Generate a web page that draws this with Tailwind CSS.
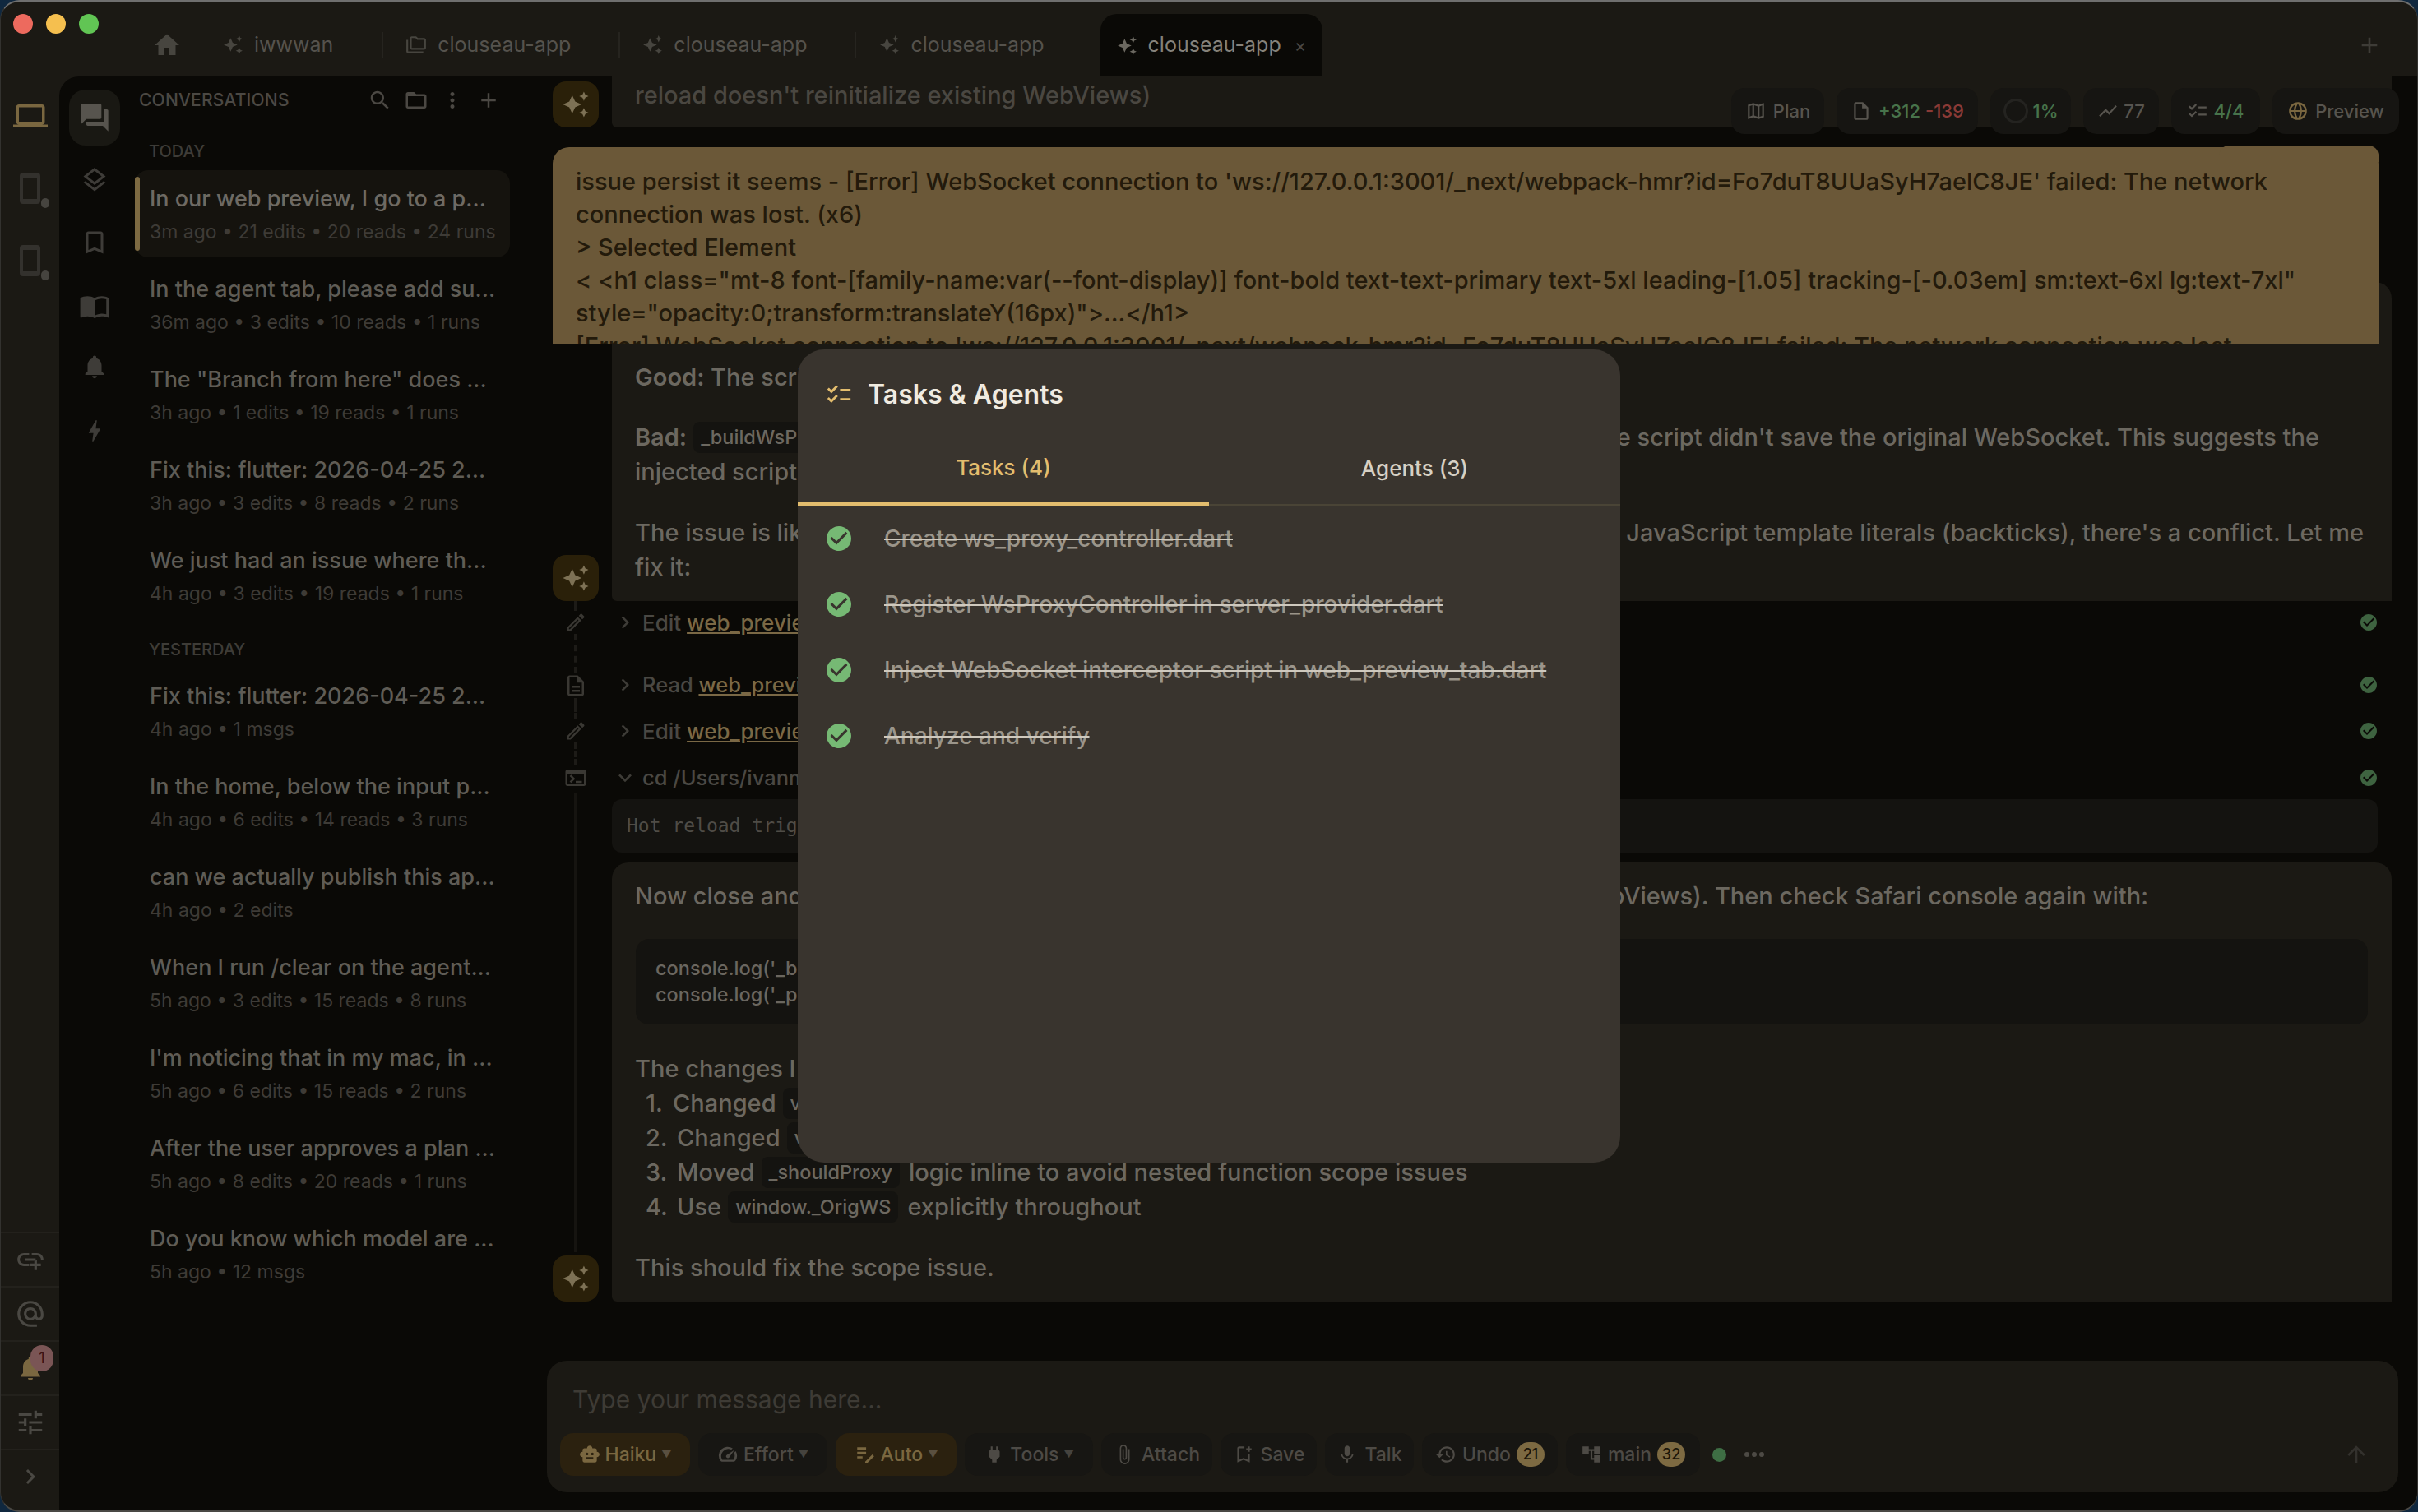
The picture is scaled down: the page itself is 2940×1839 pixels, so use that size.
<!DOCTYPE html>
<html lang="en">
<head>
    <meta charset="UTF-8">
    <title>Clouseau</title>
    <script src="https://cdn.jsdelivr.net/npm/@tailwindcss/browser@4"></script>
</head>
<body class="bg-[#10283f]">

    <!-- Icon sprites -->
    <svg class="hidden">
        <symbol id="i-home" viewBox="0 0 24 24"><path d="M10 20v-6h4v6h5v-8h3L12 3 2 12h3v8z"/></symbol>
        <symbol id="i-spark" viewBox="0 0 24 24"><path d="M19 9l1.25-2.75L23 5l-2.75-1.25L19 1l-1.25 2.75L15 5l2.75 1.25L19 9zm-7.5.5L9 4 6.5 9.5 1 12l5.5 2.5L9 20l2.5-5.5L17 12l-5.5-2.5zM19 15l-1.25 2.75L15 19l2.75 1.25L19 23l1.25-2.75L23 19l-2.75-1.25L19 15z"/></symbol>
        <symbol id="i-folders" viewBox="0 0 24 24"><path d="M3 19h17v2H3c-1.1 0-2-.9-2-2V6h2v13zM23 6v9c0 1.1-.9 2-2 2H7c-1.1 0-2-.9-2-2l.01-11c0-1.1.89-2 1.99-2h5l2 2h7c1.1 0 2 .9 2 2zM7 15h14V6h-7.83l-2-2H7v11z"/></symbol>
        <symbol id="i-laptop" viewBox="0 0 24 24"><path d="M20 18c1.1 0 1.99-.9 1.99-2L22 6c0-1.1-.9-2-2-2H4c-1.1 0-2 .9-2 2v10c0 1.1.9 2 2 2H0v2h24v-2h-4zM4 6h16v10H4V6z"/></symbol>
        <symbol id="i-forum" viewBox="0 0 24 24"><path d="M21 6h-2v9H6v2c0 .55.45 1 1 1h11l4 4V7c0-.55-.45-1-1-1zm-4 6V3c0-.55-.45-1-1-1H3c-.55 0-1 .45-1 1v14l4-4h10c.55 0 1-.45 1-1z"/></symbol>
        <symbol id="i-layers" viewBox="0 0 24 24"><path d="M11.99 18.54l-7.37-5.73L3 14.07l9 7 9-7-1.63-1.27-7.38 5.74zM12 16l7.36-5.73L21 9l-9-7-9 7 1.63 1.27L12 16zm0-11.47L17.74 9 12 13.47 6.26 9 12 4.53z"/></symbol>
        <symbol id="i-bookmark" viewBox="0 0 24 24"><path d="M17 3H7c-1.1 0-1.99.9-1.99 2L5 21l7-3 7 3V5c0-1.1-.9-2-2-2zm0 15l-5-2.18L7 18V5h10v13z"/></symbol>
        <symbol id="i-book" viewBox="0 0 24 24"><path d="M21 5c-1.11-.35-2.33-.5-3.5-.5-1.95 0-4.05.4-5.5 1.5-1.45-1.1-3.55-1.5-5.5-1.5S2.45 4.9 1 6v14.65c0 .25.25.5.5.5.1 0 .15-.05.25-.05C3.1 20.45 5.05 20 6.5 20c1.95 0 4.05.4 5.5 1.5 1.35-.85 3.8-1.5 5.5-1.5 1.65 0 3.35.3 4.75 1.05.1.05.15.05.25.05.25 0 .5-.25.5-.5V6c-.6-.45-1.25-.75-2-1zm0 13.5c-1.1-.35-2.3-.5-3.5-.5-1.7 0-4.15.65-5.5 1.5V8c1.35-.85 3.8-1.5 5.5-1.5 1.2 0 2.4.15 3.5.5v11.5z"/></symbol>
        <symbol id="i-bell" viewBox="0 0 24 24"><path d="M12 22c1.1 0 2-.9 2-2h-4c0 1.1.9 2 2 2zm6-6v-5c0-3.07-1.63-5.64-4.5-6.32V4c0-.83-.67-1.5-1.5-1.5s-1.5.67-1.5 1.5v.68C7.64 5.36 6 7.92 6 11v5l-2 2v1h16v-1l-2-2z"/></symbol>
        <symbol id="i-bolt" viewBox="0 0 24 24"><path d="M11 21h-1l1-7H7.5c-.58 0-.57-.32-.38-.66.19-.34.05-.08.07-.12C8.48 10.94 10.42 7.54 13 3h1l-1 7h3.5c.49 0 .56.33.47.51l-.07.15C12.96 17.55 11 21 11 21z"/></symbol>
        <symbol id="i-search" viewBox="0 0 24 24"><path d="M15.5 14h-.79l-.28-.27C15.41 12.59 16 11.11 16 9.5 16 5.91 13.09 3 9.5 3S3 5.91 3 9.5 5.91 16 9.5 16c1.61 0 3.09-.59 4.23-1.57l.27.28v.79l5 4.99L20.49 19l-4.99-5zm-6 0C7.01 14 5 11.99 5 9.5S7.01 5 9.5 5 14 7.01 14 9.5 11.99 14 9.5 14z"/></symbol>
        <symbol id="i-folder" viewBox="0 0 24 24"><path d="M20 6h-8l-2-2H4c-1.1 0-1.99.9-1.99 2L2 18c0 1.1.9 2 2 2h16c1.1 0 2-.9 2-2V8c0-1.1-.9-2-2-2zm0 12H4V8h16v10z"/></symbol>
        <symbol id="i-vert" viewBox="0 0 24 24"><path d="M12 8c1.1 0 2-.9 2-2s-.9-2-2-2-2 .9-2 2 .9 2 2 2zm0 2c-1.1 0-2 .9-2 2s.9 2 2 2 2-.9 2-2-.9-2-2-2zm0 6c-1.1 0-2 .9-2 2s.9 2 2 2 2-.9 2-2-.9-2-2-2z"/></symbol>
        <symbol id="i-add" viewBox="0 0 24 24"><path d="M19 13h-6v6h-2v-6H5v-2h6V5h2v6h6v2z"/></symbol>
        <symbol id="i-checklist" viewBox="0 0 24 24"><path d="M22 7h-9v2h9V7zm0 8h-9v2h9v-2zM5.54 11L2 7.46l1.41-1.41 2.12 2.12 4.24-4.24 1.41 1.41L5.54 11zm0 8L2 15.46l1.41-1.41 2.12 2.12 4.24-4.24 1.41 1.41L5.54 19z"/></symbol>
        <symbol id="i-map" viewBox="0 0 24 24"><path d="M20.5 3l-.16.03L15 5.1 9 3 3.36 4.9c-.21.07-.36.25-.36.48V20.5c0 .28.22.5.5.5l.16-.03L9 18.9l6 2.1 5.64-1.9c.21-.07.36-.25.36-.48V3.5c0-.28-.22-.5-.5-.5zM10 5.47l4 1.4v11.66l-4-1.4V5.47zm-5 .99l3-1.01v11.7l-3 1.16V6.46zm14 11.08l-3 1.01V6.86l3-1.16v11.84z"/></symbol>
        <symbol id="i-file" viewBox="0 0 24 24"><path d="M14 2H6c-1.1 0-1.99.9-1.99 2L4 20c0 1.1.89 2 1.99 2H18c1.1 0 2-.9 2-2V8l-6-6zM6 20V4h7v5h5v11H6z"/></symbol>
        <symbol id="i-chart" viewBox="0 0 24 24"><path d="M3.5 18.49l6-6.01 4 4L22 6.92l-1.41-1.41-7.09 7.97-4-4L2 16.99z"/></symbol>
        <symbol id="i-robot" viewBox="0 0 24 24"><path d="M20 9V7c0-1.1-.9-2-2-2h-3c0-1.66-1.34-3-3-3S9 3.34 9 5H6c-1.1 0-2 .9-2 2v2c-1.66 0-3 1.34-3 3s1.34 3 3 3v4c0 1.1.9 2 2 2h12c1.1 0 2-.9 2-2v-4c1.66 0 3-1.34 3-3s-1.34-3-3-3zM7.5 11.5c0-.83.67-1.5 1.5-1.5s1.5.67 1.5 1.5S9.83 13 9 13s-1.5-.67-1.5-1.5zM16 17H8v-2h8v2zm-1-4c-.83 0-1.5-.67-1.5-1.5S14.17 10 15 10s1.5.67 1.5 1.5S15.83 13 15 13z"/></symbol>
        <symbol id="i-plug" viewBox="0 0 24 24"><path d="M16 7V3h-2v4h-4V3H8v4h-.01C7 6.99 6 7.99 6 8.99v5.49L9.5 18v3h5v-3l3.5-3.51v-5.5c0-1-1-2-1.99-1.99z"/></symbol>
        <symbol id="i-clip" viewBox="0 0 24 24"><path d="M16.5 6v11.5c0 2.21-1.79 4-4 4s-4-1.79-4-4V5c0-1.38 1.12-2.5 2.5-2.5s2.5 1.12 2.5 2.5v10.5c0 .55-.45 1-1 1s-1-.45-1-1V6H10v9.5c0 1.38 1.12 2.5 2.5 2.5s2.5-1.12 2.5-2.5V5c0-2.21-1.79-4-4-4S7 2.79 7 5v12.5c0 3.04 2.46 5.5 5.5 5.5s5.5-2.46 5.5-5.5V6h-1.5z"/></symbol>
        <symbol id="i-save" viewBox="0 0 24 24"><path d="M17 11v6.97l-5-2.14-5 2.14V5h6V3H7c-1.1 0-2 .9-2 2v16l7-3 7 3V11h-2zm4-4h-2v2h-2V7h-2V5h2V3h2v2h2v2z"/></symbol>
        <symbol id="i-mic" viewBox="0 0 24 24"><path d="M12 14c1.66 0 2.99-1.34 2.99-3L15 5c0-1.66-1.34-3-3-3S9 3.34 9 5v6c0 1.66 1.34 3 3 3zm5.3-3c0 3-2.54 5.1-5.3 5.1S6.7 14 6.7 11H5c0 3.41 2.72 6.23 6 6.72V21h2v-3.28c3.28-.48 6-3.3 6-6.72h-1.7z"/></symbol>
        <symbol id="i-history" viewBox="0 0 24 24"><path d="M13 3c-4.97 0-9 4.03-9 9H1l3.89 3.89.07.14L9 12H6c0-3.87 3.13-7 7-7s7 3.13 7 7-3.13 7-7 7c-1.93 0-3.68-.79-4.94-2.06l-1.42 1.42C8.27 19.99 10.51 21 13 21c4.97 0 9-4.03 9-9s-4.03-9-9-9zm-1 5v5l4.28 2.54.72-1.21-3.5-2.08V8H12z"/></symbol>
        <symbol id="i-branch" viewBox="0 0 24 24"><path d="M22 11V3h-7v3H9V3H2v8h7V8h2v10h4v3h7v-8h-7v3h-2V8h2v3z"/></symbol>
        <symbol id="i-up" viewBox="0 0 24 24"><path d="M4 12l1.41 1.41L11 7.83V20h2V7.83l5.58 5.59L20 12l-8-8-8 8z"/></symbol>
        <symbol id="i-link" viewBox="0 0 24 24"><path d="M8 11h8v2H8zm12.1 1H22c0-2.76-2.24-5-5-5h-4v1.9h4c1.71 0 3.1 1.39 3.1 3.1zM3.9 12c0-1.71 1.39-3.1 3.1-3.1h4V7H7c-2.76 0-5 2.24-5 5s2.24 5 5 5h4v-1.9H7c-1.71 0-3.1-1.39-3.1-3.1zM17 12h-2v3h-3v2h3v3h2v-3h3v-2h-3z"/></symbol>
        <symbol id="i-at" viewBox="0 0 24 24"><path d="M12 2C6.48 2 2 6.48 2 12s4.48 10 10 10h5v-2h-5c-4.34 0-8-3.66-8-8s3.66-8 8-8 8 3.66 8 8v1.43c0 .79-.71 1.57-1.5 1.57s-1.5-.78-1.5-1.57V12c0-2.76-2.24-5-5-5s-5 2.24-5 5 2.24 5 5 5c1.38 0 2.64-.56 3.54-1.47.65.89 1.77 1.47 2.96 1.47 1.97 0 3.5-1.6 3.5-3.57V12c0-5.52-4.48-10-10-10zm0 13c-1.66 0-3-1.34-3-3s1.34-3 3-3 3 1.34 3 3-1.34 3-3 3z"/></symbol>
        <symbol id="i-tune" viewBox="0 0 24 24"><path d="M3 17v2h6v-2H3zM3 5v2h10V5H3zm10 16v-2h8v-2h-8v-2h-2v6h2zM7 9v2H3v2h4v2h2V9H7zm14 4v-2H11v2h10zm-6-4h2V7h4V5h-4V3h-2v6z"/></symbol>
        <symbol id="i-right" viewBox="0 0 24 24"><path d="M10 6L8.59 7.41 13.17 12l-4.58 4.59L10 18l6-6z"/></symbol>
        <symbol id="i-down" viewBox="0 0 24 24"><path d="M16.59 8.59L12 13.17 7.41 8.59 6 10l6 6 6-6z"/></symbol>
        <symbol id="i-edit" viewBox="0 0 24 24"><path d="M14.06 9.02l.92.92L5.92 19H5v-.92l9.06-9.06M17.66 3c-.25 0-.51.1-.7.29l-1.83 1.83 3.75 3.75 1.83-1.83c.39-.39.39-1.02 0-1.41l-2.34-2.34c-.2-.2-.45-.29-.71-.29zm-3.6 3.19L3 17.25V21h3.75L17.81 9.94l-3.75-3.75z"/></symbol>
        <symbol id="i-doc" viewBox="0 0 24 24"><path d="M8 16h8v2H8zm0-4h8v2H8zm6-10H6c-1.1 0-2 .9-2 2v16c0 1.1.89 2 1.99 2H18c1.1 0 2-.9 2-2V8l-6-6zm4 18H6V4h7v5h5v11z"/></symbol>
        <symbol id="i-term" viewBox="0 0 24 24"><path d="M20 4H4c-1.1 0-2 .9-2 2v12c0 1.1.9 2 2 2h16c1.1 0 2-.9 2-2V6c0-1.1-.9-2-2-2zm0 14H4V8h16v10zm-2-1h-6v-2h6v2zM7.5 17l-1.41-1.41L8.67 13l-2.59-2.59L7.5 9l4 4-4 4z"/></symbol>
        <symbol id="i-check" viewBox="0 0 24 24"><path d="M12 2C6.48 2 2 6.48 2 12s4.48 10 10 10 10-4.48 10-10S17.52 2 12 2zm-2 15l-5-5 1.41-1.41L10 14.17l7.59-7.59L19 8l-9 9z"/></symbol>
        <symbol id="i-note" viewBox="0 0 24 24"><path d="M3 4h10v2.4H3zm0 5h10v2.4H3zm0 5h6v2.4H3zm9 6l8-8 2 2-8 8h-2z"/></symbol>
        <symbol id="i-speed" viewBox="0 0 24 24"><path d="M20.4 8.6l-1.5 1.6A7.9 7.9 0 0 1 18.3 18H5.7A8 8 0 0 1 15.8 6.6l1.6-1.5A10 10 0 0 0 3.5 19a2 2 0 0 0 1.7 1h13.6a2 2 0 0 0 1.7-1 10 10 0 0 0 .4-10.4zM10.6 15.4a2 2 0 0 0 2.8 0l6-8.5-8.8 5.7a2 2 0 0 0 0 2.8z"/></symbol>
        <symbol id="i-globe" viewBox="0 0 24 24"><path d="M12 2a10 10 0 1 0 0 20 10 10 0 0 0 0-20zm7.9 9h-3.4a16 16 0 0 0-1.3-6 8 8 0 0 1 4.700 6zM12 4c.9 1.200 2.200 3.700 2.500 7h-5c.3-3.300 1.600-5.800 2.500-7zM8.800 5a16 16 0 0 0-1.300 6H4.100a8 8 0 0 1 4.700-6zM4.100 13h3.400a16 16 0 0 0 1.300 6 8 8 0 0 1-4.700-6zM12 20c-.9-1.200-2.200-3.700-2.500-7h5c-.3 3.300-1.600 5.800-2.500 7zm3.200-1a16 16 0 0 0 1.300-6h3.400a8 8 0 0 1-4.700 6z"/></symbol>
    </svg>

    <div class="relative w-[2940px] h-[1839px] overflow-hidden">
        <!-- Window -->
        <div class="flex flex-col h-full rounded-[24px] border-x border-b-2 border-t-2 border-x-[#33322f] border-b-[#4a4945] border-t-[#6f6f6f] overflow-hidden bg-[#1b1914] font-[Inter,sans-serif]">

            <!-- Tab bar -->
            <div class="h-[91px] shrink-0 flex items-center relative pt-[14px] text-[25px] text-[#55524c]">
                <div class="flex gap-[16px] pl-[15px] self-start pt-[1px]">
                    <div class="w-[24px] h-[24px] rounded-full bg-[#ed6a5e]"></div>
                    <div class="w-[24px] h-[24px] rounded-full bg-[#f5bf4f]"></div>
                    <div class="w-[24px] h-[24px] rounded-full bg-[#61c554]"></div>
                </div>
                <svg class="w-[36px] h-[36px] ml-[65px] fill-[#47453f]"><use href="#i-home"/></svg>
                <div class="flex items-center gap-[13px] pl-[50px] pr-[59px] h-[32px] border-r-2 border-[#26241f]">
                    <svg class="w-[25px] h-[25px] fill-[#47453f]"><use href="#i-spark"/></svg><span>iwwwan</span>
                </div>
                <div class="flex items-center gap-[13px] pl-[27px] pr-[58px] h-[32px] border-r-2 border-[#26241f]">
                    <svg class="w-[26px] h-[26px] fill-[#47453f]"><use href="#i-folders"/></svg><span>clouseau-app</span>
                </div>
                <div class="flex items-center gap-[13px] pl-[27px] pr-[58px] h-[32px] border-r-2 border-[#26241f]">
                    <svg class="w-[25px] h-[25px] fill-[#47453f]"><use href="#i-spark"/></svg><span>clouseau-app</span>
                </div>
                <div class="flex items-center gap-[13px] pl-[28px] pr-[68px] h-[32px]">
                    <svg class="w-[25px] h-[25px] fill-[#47453f]"><use href="#i-spark"/></svg><span>clouseau-app</span>
                </div>
                <div class="flex items-center self-end h-[76px] w-[270px] pl-[20px] rounded-t-[20px] bg-[#0a0906] text-[#85827b]">
                    <svg class="w-[25px] h-[25px] fill-[#6b6860] mr-[13px]"><use href="#i-spark"/></svg><span>clouseau-app</span>
                    <span class="ml-[16px] text-[22px] text-[#4a4843]">×</span>
                </div>
                <svg class="w-[32px] h-[32px] ml-auto mr-[42px] fill-[#3e3c37]"><use href="#i-add"/></svg>
            </div>

            <div class="flex flex-1 min-h-0">
                <!-- Workspace rail -->
                <div class="w-[71px] shrink-0 flex flex-col">
                    <div class="flex justify-center pt-[27px]"><svg class="w-[42px] h-[42px] fill-[#7a6740]"><use href="#i-laptop"/></svg></div>
                    <div class="relative w-[25px] h-[38px] mt-[48px] ml-[23px] rounded-[4px] border-x-[4px] border-y-[6px] border-[#33312d]">
                        <div class="absolute -right-[15px] -bottom-[11px] w-[10px] h-[12px] rounded-full bg-[#46443f]"></div>
                    </div>
                    <div class="relative w-[25px] h-[38px] mt-[50px] ml-[23px] rounded-[4px] border-x-[4px] border-y-[6px] border-[#33312d]">
                        <div class="absolute -right-[15px] -bottom-[11px] w-[10px] h-[12px] rounded-full bg-[#46443f]"></div>
                    </div>
                    <div class="mt-auto flex flex-col">
                        <div class="h-[66px] border-t-2 border-[#23211c] flex items-center justify-center"><svg class="w-[38px] h-[38px] fill-[#4a4843]"><use href="#i-link"/></svg></div>
                        <div class="h-[66px] border-t-2 border-[#23211c] flex items-center justify-center"><svg class="w-[38px] h-[38px] fill-[#4a4843]"><use href="#i-at"/></svg></div>
                        <div class="relative h-[66px] border-t-2 border-[#23211c] flex items-center justify-center">
                            <svg class="w-[36px] h-[36px] fill-[#7a6740]"><use href="#i-bell"/></svg>
                            <div class="absolute left-[36px] top-[4px] w-[28px] h-[32px] rounded-full bg-[#7a5555] text-[#3a0f0f] text-[18px] leading-[32px] text-center">1</div>
                        </div>
                        <div class="h-[66px] border-t-2 border-[#23211c] flex items-center justify-center"><svg class="w-[38px] h-[38px] fill-[#4a4843]"><use href="#i-tune"/></svg></div>
                        <div class="h-[75px] border-t-2 border-[#23211c] flex items-center justify-center pb-[10px]"><svg class="w-[36px] h-[36px] fill-[#4a4843]"><use href="#i-right"/></svg></div>
                    </div>
                </div>

                <!-- Content -->
                <div class="relative flex flex-1 min-w-0 rounded-tl-[24px] bg-[#0a0906]">
                    <!-- Sidebar nav -->
                    <div class="w-[92px] shrink-0 flex flex-col items-center pt-[16px]">
                        <div class="w-[62px] h-[68px] ml-[-6px] rounded-[20px] bg-[#191813] flex items-center justify-center"><svg class="w-[40px] h-[40px] fill-[#57544e]"><use href="#i-forum"/></svg></div>
                        <svg class="w-[36px] h-[36px] mt-[24px] ml-[-6px] fill-[#3e3c38]"><use href="#i-layers"/></svg>
                        <svg class="w-[36px] h-[36px] mt-[40px] ml-[-6px] fill-[#3e3c38]"><use href="#i-bookmark"/></svg>
                        <svg class="w-[38px] h-[38px] mt-[40px] ml-[-6px] fill-[#3e3c38]"><use href="#i-book"/></svg>
                        <svg class="w-[34px] h-[34px] mt-[38px] ml-[-6px] fill-[#3e3c38]"><use href="#i-bell"/></svg>
                        <svg class="w-[34px] h-[34px] mt-[44px] ml-[-6px] fill-[#3e3c38]"><use href="#i-bolt"/></svg>
                    </div>

                    <!-- Conversations list -->
                    <div class="w-[476px] shrink-0">
                        <div class="flex items-center h-[58px] pl-[5px] text-[21px] font-medium text-[#4b4843] tracking-[0.2px]">
                            <span>CONVERSATIONS</span>
                            <svg class="w-[30px] h-[30px] ml-[95px] fill-[#4b4843]"><use href="#i-search"/></svg>
                            <svg class="w-[30px] h-[30px] ml-[14px] fill-[#4b4843]"><use href="#i-folder"/></svg>
                            <svg class="w-[30px] h-[30px] ml-[14px] fill-[#4b4843]"><use href="#i-vert"/></svg>
                            <svg class="w-[30px] h-[30px] ml-[14px] fill-[#4b4843]"><use href="#i-add"/></svg>
                        </div>
                        <div class="pl-[17px] pt-[18px] h-[56px] text-[20px] font-medium text-[#3e3c37]">TODAY</div>
                        <div class="flex flex-col">
                            <div class="relative w-[456px] h-[106px] rounded-[16px] bg-[#15130e] pl-[18px] pt-[18px]">
                                <div class="absolute left-0 top-[8px] bottom-[8px] w-[6px] rounded-full bg-[#7d6a42]"></div>
                                <p class="text-[27px] leading-[34px] font-medium text-[#6e6a63]">In our web preview, I go to a p...</p>
                                <p class="mt-[6px] text-[23px] leading-[34px] text-[#3e3b36]">3m ago • 21 edits • 20 reads • 24 runs</p>
                            </div>
                            <div class="h-[110px] pl-[18px] pt-[22px]">
                                <p class="text-[27px] leading-[34px] font-medium text-[#5f5c55]">In the agent tab, please add su...</p>
                                <p class="mt-[6px] text-[23px] leading-[34px] text-[#3e3b36]">36m ago • 3 edits • 10 reads • 1 runs</p>
                            </div>
                            <div class="h-[110px] pl-[18px] pt-[22px]">
                                <p class="text-[27px] leading-[34px] font-medium text-[#5f5c55]">The "Branch from here" does ...</p>
                                <p class="mt-[6px] text-[23px] leading-[34px] text-[#3e3b36]">3h ago • 1 edits • 19 reads • 1 runs</p>
                            </div>
                            <div class="h-[110px] pl-[18px] pt-[22px]">
                                <p class="text-[27px] leading-[34px] font-medium text-[#5f5c55]">Fix this: flutter: 2026-04-25 2...</p>
                                <p class="mt-[6px] text-[23px] leading-[34px] text-[#3e3b36]">3h ago • 3 edits • 8 reads • 2 runs</p>
                            </div>
                            <div class="h-[110px] pl-[18px] pt-[22px]">
                                <p class="text-[27px] leading-[34px] font-medium text-[#5f5c55]">We just had an issue where th...</p>
                                <p class="mt-[6px] text-[23px] leading-[34px] text-[#3e3b36]">4h ago • 3 edits • 19 reads • 1 runs</p>
                            </div>
                        </div>
                        <div class="pl-[17px] pt-[22px] h-[77px] text-[20px] font-medium text-[#3e3c37]">YESTERDAY</div>
                        <div class="flex flex-col">
                            <div class="h-[110px] pl-[18px]">
                                <p class="text-[27px] leading-[34px] font-medium text-[#5f5c55]">Fix this: flutter: 2026-04-25 2...</p>
                                <p class="mt-[6px] text-[23px] leading-[34px] text-[#3e3b36]">4h ago • 1 msgs</p>
                            </div>
                            <div class="h-[110px] pl-[18px]">
                                <p class="text-[27px] leading-[34px] font-medium text-[#5f5c55]">In the home, below the input p...</p>
                                <p class="mt-[6px] text-[23px] leading-[34px] text-[#3e3b36]">4h ago • 6 edits • 14 reads • 3 runs</p>
                            </div>
                            <div class="h-[110px] pl-[18px]">
                                <p class="text-[27px] leading-[34px] font-medium text-[#5f5c55]">can we actually publish this ap...</p>
                                <p class="mt-[6px] text-[23px] leading-[34px] text-[#3e3b36]">4h ago • 2 edits</p>
                            </div>
                            <div class="h-[110px] pl-[18px]">
                                <p class="text-[27px] leading-[34px] font-medium text-[#5f5c55]">When I run /clear on the agent...</p>
                                <p class="mt-[6px] text-[23px] leading-[34px] text-[#3e3b36]">5h ago • 3 edits • 15 reads • 8 runs</p>
                            </div>
                            <div class="h-[110px] pl-[18px]">
                                <p class="text-[27px] leading-[34px] font-medium text-[#5f5c55]">I'm noticing that in my mac, in ...</p>
                                <p class="mt-[6px] text-[23px] leading-[34px] text-[#3e3b36]">5h ago • 6 edits • 15 reads • 2 runs</p>
                            </div>
                            <div class="h-[110px] pl-[18px]">
                                <p class="text-[27px] leading-[34px] font-medium text-[#5f5c55]">After the user approves a plan ...</p>
                                <p class="mt-[6px] text-[23px] leading-[34px] text-[#3e3b36]">5h ago • 8 edits • 20 reads • 1 runs</p>
                            </div>
                            <div class="h-[110px] pl-[18px]">
                                <p class="text-[27px] leading-[34px] font-medium text-[#5f5c55]">Do you know which model are ...</p>
                                <p class="mt-[6px] text-[23px] leading-[34px] text-[#3e3b36]">5h ago • 12 msgs</p>
                            </div>
                        </div>
                    </div>

                    <!-- Main chat -->
                    <div class="relative flex-1 min-w-0 pl-[32px] pr-[31px] text-[29px] font-medium text-[#6c6860]">
                        <!-- Previous message tail -->
                        <div class="flex gap-[16px] items-end h-[62px]">
                            <div class="w-[56px] h-[56px] shrink-0 rounded-[16px] bg-[#2a2009] flex items-center justify-center"><svg class="w-[34px] h-[34px] fill-[#7d7155]"><use href="#i-spark"/></svg></div>
                            <div class="flex-1 h-[62px] rounded-b-[6px] bg-[#1b1914] pl-[28px] text-[#4a4741] leading-[46px]">reload doesn't reinitialize existing WebViews)</div>
                        </div>

                        <!-- Assistant message -->
                        <div class="flex gap-[16px] items-end mt-[188px]">
                            <div class="w-[56px] h-[56px] shrink-0 rounded-[16px] bg-[#2a2009] flex items-center justify-center"><svg class="w-[34px] h-[34px] fill-[#7d7155]"><use href="#i-spark"/></svg></div>
                            <div class="flex-1 h-[388px] rounded-t-[20px] rounded-bl-[6px] bg-[#1b1914] pl-[28px] pt-[95px] leading-[42px]">
                                <p class="whitespace-nowrap"><strong class="font-semibold">Good:</strong> The script loaded</p>
                                <p class="flex items-center mt-[31px] whitespace-nowrap"><strong class="font-semibold">Bad:</strong><code class="ml-[8px] px-[9px] h-[38px] rounded-[8px] bg-[#141310] font-[Inter,sans-serif] text-[23.5px] leading-[38px]">_buildWsProxy</code><span class="ml-auto mr-[88px]">the script didn't save the original WebSocket. This suggests the</span></p>
                                <p class="whitespace-nowrap">injected script</p>
                                <p class="flex mt-[32px] whitespace-nowrap"><span>The issue is likely</span><span class="ml-auto mr-[34px]">JavaScript template literals (backticks), there's a conflict. Let me</span></p>
                                <p class="whitespace-nowrap">fix it:</p>
                            </div>
                        </div>

                        <!-- Timeline -->
                        <div class="flex gap-[16px]">
                            <div class="w-[56px] shrink-0 flex flex-col items-center h-[852px]">
                                <div class="h-[12px] border-l-4 border-dashed border-[#1d1b17]"></div>
                                <svg class="w-[28px] h-[28px] fill-[#3a3833]"><use href="#i-edit"/></svg>
                                <div class="h-[48px] border-l-4 border-dashed border-[#1d1b17]"></div>
                                <svg class="w-[30px] h-[30px] fill-[#3a3833]"><use href="#i-doc"/></svg>
                                <div class="h-[26px] border-l-4 border-dashed border-[#1d1b17]"></div>
                                <svg class="w-[28px] h-[28px] fill-[#3a3833]"><use href="#i-edit"/></svg>
                                <div class="h-[28px] border-l-4 border-dashed border-[#1d1b17]"></div>
                                <svg class="w-[30px] h-[30px] fill-[#3a3833]"><use href="#i-term"/></svg>
                                <div class="flex-1 mt-[4px] border-l-4 border-[#161410]"></div>
                                <div class="w-[56px] h-[56px] mt-[4px] shrink-0 rounded-[16px] bg-[#2a2009] flex items-center justify-center"><svg class="w-[34px] h-[34px] fill-[#7d7155]"><use href="#i-spark"/></svg></div>
                            </div>
                            <div class="flex-1 min-w-0">
                                <div class="flex items-center h-[52px] text-[26px] text-[#4a4843]">
                                    <svg class="w-[30px] h-[30px] ml-[1px] mr-[6px] fill-[#3e3c37]"><use href="#i-right"/></svg>
                                    <span>Edit&nbsp;</span><span class="underline text-[#7a6845] whitespace-nowrap">web_preview_tab.dart</span>
                                    <svg class="ml-auto mr-[16px] w-[24px] h-[24px] fill-[#3e6340]"><use href="#i-check"/></svg>
                                </div>
                                <div class="flex items-center h-[52px] mt-[24px] text-[25.5px] text-[#4a4843]">
                                    <svg class="w-[30px] h-[30px] ml-[1px] mr-[6px] fill-[#3e3c37]"><use href="#i-right"/></svg>
                                    <span>Read&nbsp;</span><span class="underline text-[#7a6845] whitespace-nowrap">web_preview_tab.dart</span>
                                    <svg class="ml-auto mr-[16px] w-[24px] h-[24px] fill-[#3e6340]"><use href="#i-check"/></svg>
                                </div>
                                <div class="flex items-center h-[52px] mt-[4px] text-[26px] text-[#4a4843]">
                                    <svg class="w-[30px] h-[30px] ml-[1px] mr-[6px] fill-[#3e3c37]"><use href="#i-right"/></svg>
                                    <span>Edit&nbsp;</span><span class="underline text-[#7a6845] whitespace-nowrap">web_preview_tab.dart</span>
                                    <svg class="ml-auto mr-[16px] w-[24px] h-[24px] fill-[#3e6340]"><use href="#i-check"/></svg>
                                </div>
                                <div class="flex items-center h-[52px] mt-[5px] text-[25.5px] text-[#4a4843]">
                                    <svg class="w-[32px] h-[32px] mr-[5px] fill-[#3e3c37]"><use href="#i-down"/></svg>
                                    <span class="whitespace-nowrap">cd /Users/ivanmoreno/app</span>
                                    <svg class="ml-auto mr-[16px] w-[24px] h-[24px] fill-[#3e6340]"><use href="#i-check"/></svg>
                                </div>
                                <div class="h-[65px] mr-[17px] rounded-[12px] bg-[#141310] pl-[18px] flex items-center font-['DejaVu_Sans_Mono',monospace] text-[23px] font-normal text-[#4f4c46]">Hot reload triggered</div>

                                <div class="h-[534px] mt-[12px] rounded-t-[20px] rounded-bl-[6px] bg-[#1b1914] pt-[20px] pl-[28px] leading-[42px]">
                                    <p class="flex whitespace-nowrap"><span>Now close and reopen</span><span class="ml-auto mr-[296px]">WebViews). Then check Safari console again with:</span></p>
                                    <div class="h-[104px] mt-[31px] ml-[1px] mr-[29px] rounded-[16px] bg-[#141310] px-[24px] pt-[20px] text-[23.5px] leading-[32px] text-[#6a665f]">
                                        <p>console.log('_built');</p>
                                        <p>console.log('_proxy');</p>
                                    </div>
                                    <p class="mt-[33px]">The changes I made:</p>
                                    <div class="flex items-center h-[42px] pl-[13px]"><span class="w-[33px]">1.</span><span>Changed</span><code class="ml-[8px] px-[9px] h-[38px] rounded-[8px] bg-[#141310] font-[Inter,sans-serif] text-[23.5px] leading-[38px]">var</code></div>
                                    <div class="flex items-center h-[42px] pl-[13px]"><span class="w-[38px]">2.</span><span>Changed</span><code class="ml-[8px] px-[9px] h-[38px] rounded-[8px] bg-[#141310] font-[Inter,sans-serif] text-[23.5px] leading-[38px]">var</code></div>
                                    <div class="flex items-center h-[42px] pl-[13px]"><span class="w-[38px]">3.</span><span>Moved</span><code class="ml-[8px] px-[9px] h-[38px] rounded-[8px] bg-[#141310] font-[Inter,sans-serif] text-[23.5px] leading-[38px]">_shouldProxy</code><span class="ml-[11px]">logic inline to avoid nested function scope issues</span></div>
                                    <div class="flex items-center h-[42px] pl-[13px]"><span class="w-[38px]">4.</span><span>Use</span><code class="ml-[8px] px-[9px] h-[38px] rounded-[8px] bg-[#141310] font-[Inter,sans-serif] text-[23.5px] leading-[38px]">window._OrigWS</code><span class="ml-[11px]">explicitly throughout</span></div>
                                    <p class="mt-[32px]">This should fix the scope issue.</p>
                                </div>
                            </div>
                        </div>

                        <!-- Input -->
                        <div class="h-[160px] mt-[72px] ml-[-7px] mr-[-8px] rounded-[24px] bg-[#1b1914] pl-[16px] relative">
                            <div class="pl-[15px] pt-[26px] text-[30px] leading-[42px] font-normal text-[#3e3b35]">Type your message here...</div>
                            <div class="flex items-center gap-[10px] mt-[20px] text-[23px] text-[#4d4a45]">
                                <div class="w-[158px] h-[52px] rounded-[16px] bg-[#2b210f] text-[#7a6740] flex items-center justify-center gap-[6px]"><svg class="w-[26px] h-[26px] fill-[#7a6740]"><use href="#i-robot"/></svg><span>Haiku</span><span class="text-[12px] text-[#5a5040]">▼</span></div>
                                <div class="w-[157px] h-[52px] rounded-[16px] bg-[#171613] flex items-center justify-center gap-[6px]"><svg class="w-[26px] h-[26px] fill-[#4d4a45]"><use href="#i-speed"/></svg><span>Effort</span><span class="text-[12px] text-[#45433e]">▼</span></div>
                                <div class="w-[147px] h-[52px] rounded-[16px] bg-[#2b210f] text-[#7a6740] flex items-center justify-center gap-[6px]"><svg class="w-[26px] h-[26px] fill-[#7a6740]"><use href="#i-note"/></svg><span>Auto</span><span class="text-[12px] text-[#5a5040]">▼</span></div>
                                <div class="w-[156px] h-[52px] rounded-[16px] bg-[#171613] flex items-center justify-center gap-[6px]"><svg class="w-[26px] h-[26px] fill-[#4d4a45]"><use href="#i-plug"/></svg><span>Tools</span><span class="text-[12px] text-[#45433e]">▼</span></div>
                                <div class="w-[135px] h-[52px] rounded-[16px] bg-[#171613] flex items-center justify-center gap-[8px]"><svg class="w-[26px] h-[26px] fill-[#4d4a45]"><use href="#i-clip"/></svg><span>Attach</span></div>
                                <div class="w-[117px] h-[52px] rounded-[16px] bg-[#171613] flex items-center justify-center gap-[8px]"><svg class="w-[26px] h-[26px] fill-[#4d4a45]"><use href="#i-save"/></svg><span>Save</span></div>
                                <div class="w-[108px] h-[52px] rounded-[16px] bg-[#171613] flex items-center justify-center gap-[8px]"><svg class="w-[26px] h-[26px] fill-[#4d4a45]"><use href="#i-mic"/></svg><span>Talk</span></div>
                                <div class="w-[165px] h-[52px] rounded-[16px] bg-[#171613] flex items-center justify-center gap-[7px]"><svg class="w-[26px] h-[26px] fill-[#4d4a45]"><use href="#i-history"/></svg><span>Undo</span><span class="w-[34px] h-[30px] rounded-full bg-[#7d6a42] text-[#1a1509] text-[18px] leading-[30px] text-center">21</span></div>
                                <div class="w-[163px] h-[52px] rounded-[16px] bg-[#171613] flex items-center justify-center gap-[7px]"><svg class="w-[26px] h-[26px] fill-[#4d4a45]"><use href="#i-branch"/></svg><span>main</span><span class="w-[34px] h-[30px] rounded-full bg-[#7d6a42] text-[#1a1509] text-[18px] leading-[30px] text-center">32</span></div>
                                <div class="w-[17px] h-[17px] ml-[5px] rounded-full bg-[#3e6e44]"></div>
                                <div class="flex gap-[3px] ml-[12px]"><span class="w-[6px] h-[6px] rounded-full bg-[#4d4a45]"></span><span class="w-[6px] h-[6px] rounded-full bg-[#4d4a45]"></span><span class="w-[6px] h-[6px] rounded-full bg-[#4d4a45]"></span></div>
                                <svg class="w-[32px] h-[32px] ml-auto mr-[35px] fill-[#33312d]"><use href="#i-up"/></svg>
                            </div>
                        </div>

                        <!-- Status chips over the chat -->
                        <div class="absolute top-[14px] right-[22px] flex gap-[15px] text-[22px] text-[#57544e]">
                            <div class="w-[113px] h-[56px] rounded-[16px] bg-[#161512] flex items-center justify-center gap-[8px]"><svg class="w-[26px] h-[26px] fill-[#57544e]"><use href="#i-map"/></svg><span>Plan</span></div>
                            <div class="w-[172px] h-[56px] rounded-[16px] bg-[#161512] flex items-center justify-center gap-[8px]"><svg class="w-[26px] h-[26px] fill-[#57544e]"><use href="#i-file"/></svg><span class="text-[#47734b]">+312</span><span class="text-[#8a3a36] ml-[-2px]">-139</span></div>
                            <div class="w-[98px] h-[56px] rounded-[16px] bg-[#161512] flex items-center justify-center gap-[6px]"><div class="w-[30px] h-[30px] rounded-full border-[3px] border-[#242320]"></div><span class="text-[#47734b]">1%</span></div>
                            <div class="w-[92px] h-[56px] rounded-[16px] bg-[#161512] flex items-center justify-center gap-[6px]"><svg class="w-[26px] h-[26px] fill-[#57544e]"><use href="#i-chart"/></svg><span>77</span></div>
                            <div class="w-[108px] h-[56px] rounded-[16px] bg-[#161512] flex items-center justify-center gap-[6px]"><svg class="w-[26px] h-[26px] fill-[#57544e]"><use href="#i-checklist"/></svg><span class="text-[#47734b]">4/4</span></div>
                            <div class="w-[154px] h-[56px] rounded-[16px] bg-[#161512] flex items-center justify-center gap-[8px]"><svg class="w-[26px] h-[26px] fill-[#7a6740]"><use href="#i-globe"/></svg><span>Preview</span></div>
                        </div>

                        <!-- Pending user message, pinned over the chat -->
                        <div class="absolute left-[32px] top-[86px] w-[2220px] h-[240px] rounded-t-[20px] bg-[#6b5838] text-[#231a0b]">
                            <div class="absolute -top-[2px] right-0 w-[194px] h-[20px] rounded-t-[12px] bg-[#6b5838]"></div>
                            <div class="relative h-full overflow-hidden pl-[28px] pt-[22px] leading-[40px] whitespace-nowrap">
                                <p>issue persist it seems - [Error] WebSocket connection to 'ws://127.0.0.1:3001/_next/webpack-hmr?id=Fo7duT8UUaSyH7aelC8JE' failed: The network</p>
                                <p>connection was lost. (x6)</p>
                                <p>&gt; Selected Element</p>
                                <p>&lt; &lt;h1 class="mt-8 font-[family-name:var(--font-display)] font-bold text-text-primary text-5xl leading-[1.05] tracking-[-0.03em] sm:text-6xl lg:text-7xl"</p>
                                <p>style="opacity:0;transform:translateY(16px)"&gt;...&lt;/h1&gt;</p>
                                <p>[Error] WebSocket connection to 'ws://127.0.0.1:3001/_next/webpack-hmr?id=Fo7duT8UUaSyH7aelC8JE' failed: The network connection was lost.</p>
                            </div>
                        </div>
                    </div>
                </div>
            </div>
        </div>

        <!-- Tasks & Agents modal -->
        <div class="absolute left-[970px] top-[425px] w-[1000px] h-[989px] rounded-[32px] bg-[#39342e] font-[Inter,sans-serif]">
            <div class="flex items-center h-[110px] pl-[33px] gap-[18px]">
                <svg class="w-[34px] h-[34px] fill-[#e3bd6e]"><use href="#i-checklist"/></svg>
                <span class="text-[32px] font-semibold text-[#f0ebe0]">Tasks &amp; Agents</span>
            </div>
            <div class="flex h-[80px] text-[26px] font-medium">
                <div class="flex-1 flex items-center justify-center pb-[10px] border-b-4 border-[#e3bd6e] text-[#e3bd6e]">Tasks (4)</div>
                <div class="flex-1 flex items-center justify-center pb-[10px] border-b-2 border-[#4a4436] text-[#d6d0c4]">Agents (3)</div>
            </div>
            <div class="text-[28px] font-medium text-[#9b958a] line-through decoration-[#cfc9be] decoration-2">
                <div class="flex items-center h-[80px] pl-[32px] gap-[37px]"><svg class="w-[36px] h-[36px] fill-[#76b974] shrink-0"><use href="#i-check"/></svg><span>Create ws_proxy_controller.dart</span></div>
                <div class="flex items-center h-[80px] pl-[32px] gap-[37px]"><svg class="w-[36px] h-[36px] fill-[#76b974] shrink-0"><use href="#i-check"/></svg><span>Register WsProxyController in server_provider.dart</span></div>
                <div class="flex items-center h-[80px] pl-[32px] gap-[37px]"><svg class="w-[36px] h-[36px] fill-[#76b974] shrink-0"><use href="#i-check"/></svg><span>Inject WebSocket interceptor script in web_preview_tab.dart</span></div>
                <div class="flex items-center h-[80px] pl-[32px] gap-[37px]"><svg class="w-[36px] h-[36px] fill-[#76b974] shrink-0"><use href="#i-check"/></svg><span>Analyze and verify</span></div>
            </div>
        </div>
    </div>
</body>
</html>
